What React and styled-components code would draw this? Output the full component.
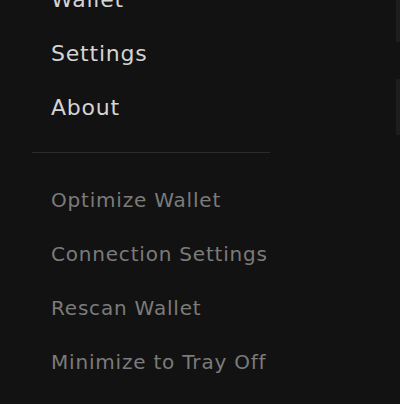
import React from 'react';
import styled, { createGlobalStyle } from 'styled-components';

const primaryItems = ['Wallet', 'Settings', 'About'];
const secondaryItems = [
  'Optimize Wallet',
  'Connection Settings',
  'Rescan Wallet',
  'Minimize to Tray Off',
];

export default function App() {
  return (
    <Page>
      <GlobalStyle />
      <Menu>
        <MenuList>
          {primaryItems.map(name => (
            <MenuItem key={name} primary>
              {name}
            </MenuItem>
          ))}
        </MenuList>
        <Divider />
        <MenuList>
          {secondaryItems.map(name => (
            <MenuItem key={name}>{name}</MenuItem>
          ))}
        </MenuList>
      </Menu>
      <EdgeStrip>
        <EdgeBlock h={42} />
        <EdgeGap h={37} />
        <EdgeBlock h={56} />
      </EdgeStrip>
    </Page>
  );
}

const GlobalStyle = createGlobalStyle`
  html, body {
    margin: 0;
    padding: 0;
    background: #121212;
  }
  * {
    box-sizing: border-box;
  }
`;

const Page = styled.div`
  display: flex;
  width: 400px;
  height: 404px;
  overflow: hidden;
  background: #121212;
  font-family: 'DejaVu Sans', 'Liberation Sans', sans-serif;
`;

const Menu = styled.nav`
  flex: 1;
  display: flex;
  flex-direction: column;
  margin-top: -28px;
`;

const MenuList = styled.ul`
  list-style: none;
  margin: 0;
  padding: 0;
`;

const MenuItem = styled.li`
  display: flex;
  align-items: center;
  height: 54px;
  padding-left: 51px;
  font-size: ${p => (p.primary ? '22px' : '20px')};
  color: ${p => (p.primary ? '#d4d4d4' : '#7b7b7b')};
  letter-spacing: 0.8px;
  white-space: nowrap;
`;

const Divider = styled.hr`
  width: 238px;
  height: 1px;
  margin: 18px 0 20px 32px;
  border: none;
  background: #2c2c2c;
`;

const EdgeStrip = styled.div`
  display: flex;
  flex-direction: column;
  width: 4px;
`;

const EdgeBlock = styled.div`
  height: ${p => p.h}px;
  background: #1d1d1d;
`;

const EdgeGap = styled.div`
  height: ${p => p.h}px;
`;
